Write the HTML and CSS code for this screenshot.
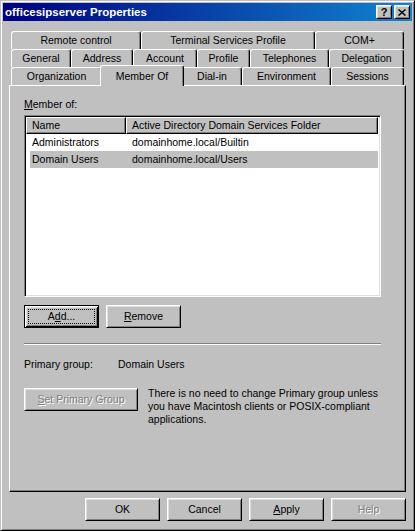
FILE: index.html
```html
<!DOCTYPE html>
<html>
<head>
<meta charset="utf-8">
<link rel="stylesheet" href="styles.css">
</head>
<body>
<div class="window">
  <div class="titlebar">
    <span class="title">officesipserver Properties</span>
    <div class="cbtns">
      <span class="cbtn qmark">?</span>
      <span class="cbtn"><svg width="8" height="7" viewBox="0 0 8 7"><path d="M0.5 0.5 L7.5 6.5 M7.5 0.5 L0.5 6.5" stroke="#000" stroke-width="1.5" fill="none"/></svg></span>
    </div>
  </div>
  <div class="client">
    <div class="tabs">
      <div class="tabrow r1">
        <div class="tab">Remote control</div>
        <div class="tab">Terminal Services Profile</div>
        <div class="tab">COM+</div>
      </div>
      <div class="tabrow r2">
        <div class="tab">General</div>
        <div class="tab">Address</div>
        <div class="tab">Account</div>
        <div class="tab">Profile</div>
        <div class="tab">Telephones</div>
        <div class="tab">Delegation</div>
      </div>
      <div class="tabrow r3">
        <div class="tab">Organization</div>
        <div class="tab sel">Member Of</div>
        <div class="tab">Dial-in</div>
        <div class="tab">Environment</div>
        <div class="tab">Sessions</div>
      </div>
    </div>
    <div class="panel">
      <div class="label"><u>M</u>ember of:</div>
      <div class="list">
        <div class="lv-head">
          <div class="hc hc1">Name</div>
          <div class="hc hc2">Active Directory Domain Services Folder</div>
        </div>
        <div class="lv-row">
          <div class="c1">Administrators</div>
          <div class="c2">domainhome.local/Builtin</div>
        </div>
        <div class="lv-row sel">
          <div class="c1">Domain Users</div>
          <div class="c2">domainhome.local/Users</div>
        </div>
      </div>
      <div class="btnrow">
        <div class="btn default">A<u>d</u>d...</div>
        <div class="btn"><u>R</u>emove</div>
      </div>
      <div class="sep"></div>
      <div class="prow">
        <div class="plabel">Primary group:</div>
        <div>Domain Users</div>
      </div>
      <div class="setrow">
        <div class="btn wide disabled"><u>S</u>et Primary Group</div>
        <div class="note">There is no need to change Primary group unless<br>you have Macintosh clients or POSIX-compliant<br>applications.</div>
      </div>
    </div>
    <div class="footer">
      <div class="btn">OK</div>
      <div class="btn">Cancel</div>
      <div class="btn"><u>A</u>pply</div>
      <div class="btn disabled">Help</div>
    </div>
  </div>
</div>
</body>
</html>
```
FILE: styles.css
```css
html, body {
  margin: 0;
  padding: 0;
}
body {
  font-family: "Liberation Sans", Arial, sans-serif;
  font-size: 10.5px;
  line-height: 13px;
  color: #000;
  background: #c0c0c0;
}
u {
  text-decoration: underline;
  text-underline-offset: 1px;
}
.window {
  width: 415px;
  height: 531px;
  box-sizing: border-box;
  background: #c0c0c0;
  border: 1px solid;
  border-color: #c0c0c0 #000 #000 #c0c0c0;
  box-shadow: inset 1px 1px #fff, inset -1px -1px #808080;
  padding: 2px;
  display: flex;
  flex-direction: column;
}
.titlebar {
  height: 18px;
  flex: none;
  display: flex;
  align-items: center;
  padding: 0 2px;
  background: linear-gradient(to right, #000080, #1084d0);
  color: #fff;
}
.title {
  flex: 1;
  font-weight: bold;
  font-size: 11.5px;
}
.cbtns {
  display: flex;
  gap: 2px;
}
.cbtn {
  width: 16px;
  height: 14px;
  box-sizing: border-box;
  background: #c0c0c0;
  border: 1px solid;
  border-color: #fff #000 #000 #fff;
  box-shadow: inset 1px 1px #dfdfdf, inset -1px -1px #808080;
  display: flex;
  align-items: center;
  justify-content: center;
  color: #000;
}
.qmark {
  font-weight: bold;
  font-size: 11px;
}
.client {
  flex: 1;
  display: flex;
  flex-direction: column;
  padding: 10px 6px 0;
}
.tabs {
  padding: 0 2px;
}
.tabrow {
  display: grid;
  height: 18px;
}
.r1 { grid-template-columns: 130px 174px 89px; }
.r2 { grid-template-columns: 60px 62px 64px 53px 79px 75px; }
.r3 { grid-template-columns: 91px 80px 60px 89px 73px; }
.tab {
  box-sizing: border-box;
  border: 1px solid;
  border-bottom: none;
  border-color: #fff #000 #000 #fff;
  border-radius: 3px 3px 0 0;
  box-shadow: inset -1px 0 #808080;
  display: flex;
  align-items: center;
  justify-content: center;
  white-space: nowrap;
  background: #c0c0c0;
}
.tab.sel {
  margin: -2px -2px -1px -2px;
  position: relative;
  z-index: 1;
}
.panel {
  height: 407px;
  box-sizing: border-box;
  border: 1px solid;
  border-color: #fff #000 #000 #fff;
  box-shadow: inset -1px -1px #808080;
  padding: 12px 0 0 14px;
}
.list {
  margin-top: 4px;
  width: 357px;
  height: 182px;
  box-sizing: border-box;
  background: #fff;
  border: 1px solid;
  border-color: #808080 #fff #fff #808080;
  box-shadow: inset 1px 1px #000, inset -1px -1px #dfdfdf;
  padding: 1px;
}
.lv-head {
  display: flex;
  height: 17px;
}
.hc {
  box-sizing: border-box;
  height: 17px;
  border: 1px solid;
  border-color: #fff #000 #000 #fff;
  box-shadow: inset -1px -1px #808080;
  background: #c0c0c0;
  padding-left: 5px;
  display: flex;
  align-items: center;
  white-space: nowrap;
}
.hc1 { width: 100px; }
.hc2 { width: 252px; }
.lv-row {
  display: flex;
  align-items: center;
  height: 17px;
  margin-left: 4px;
  width: 348px;
}
.lv-row.sel {
  background: #c0c0c0;
}
.c1 {
  width: 96px;
  box-sizing: border-box;
  padding-left: 2px;
}
.c2 {
  padding-left: 6px;
}
.btnrow {
  display: flex;
  gap: 7px;
  margin-top: 8px;
}
.btn {
  width: 75px;
  height: 23px;
  box-sizing: border-box;
  background: #c0c0c0;
  border: 1px solid;
  border-color: #fff #000 #000 #fff;
  box-shadow: inset 1px 1px #dfdfdf, inset -1px -1px #808080;
  display: flex;
  align-items: center;
  justify-content: center;
  white-space: nowrap;
}
.btn.default {
  border-color: #000;
  box-shadow: inset 1px 1px #fff, inset -1px -1px #000, inset 2px 2px #dfdfdf, inset -2px -2px #808080;
  outline: 1px dotted #000;
  outline-offset: -5px;
}
.btn.wide {
  width: 114px;
}
.btn.disabled {
  color: #808080;
  text-shadow: 1px 1px #fff;
}
.sep {
  margin-top: 15px;
  width: 357px;
  border-top: 1px solid #808080;
  border-bottom: 1px solid #fff;
}
.prow {
  display: flex;
  margin-top: 13px;
}
.plabel {
  width: 94px;
}
.setrow {
  display: flex;
  align-items: flex-start;
  gap: 10px;
  margin-top: 17px;
}
.note {
  margin-top: -1px;
}
.footer {
  display: flex;
  justify-content: flex-end;
  gap: 7px;
  margin-top: 6px;
}
```
